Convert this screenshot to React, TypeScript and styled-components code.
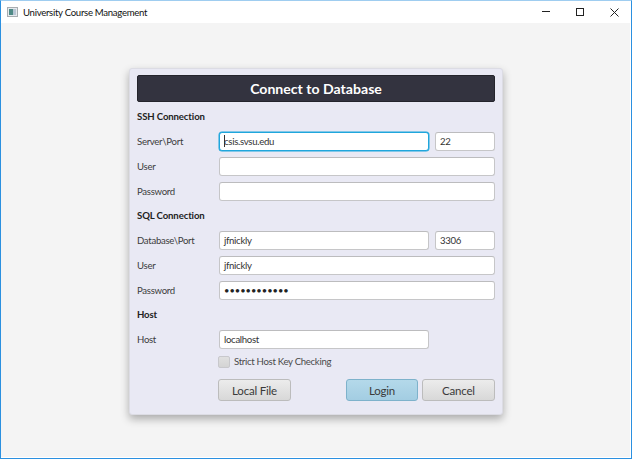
import React from "react";
import styled, { createGlobalStyle } from "styled-components";

const Global = createGlobalStyle`
  html, body { margin: 0; padding: 0; background: #f4f4f4; }
  #root { width: 632px; height: 459px; overflow: hidden; }
  * { box-sizing: border-box; }
`;

const Window = styled.div`
  width: 632px;
  height: 459px;
  display: flex;
  flex-direction: column;
  background: #fff;
  font-family: Lato, "Noto Sans", sans-serif;
  color: #333;
  border: 1px solid #2b90e0;
  border-top-color: #9fcdf0;
  padding: 0 1px 1px 0;
`;

const TitleBar = styled.div`
  height: 22px;
  margin-right: -1px;
  background: #fff;
  display: flex;
  align-items: center;
  padding-left: 6px;
  flex: none;
`;

const AppTitle = styled.span`
  margin-left: 5px;
  font-size: 9.6px;
  letter-spacing: -0.3px;
  color: #111;
  flex: 1;
`;

const WinButton = styled.div`
  width: 34px;
  height: 22px;
  display: flex;
  align-items: center;
  justify-content: center;
`;

const Stage = styled.div`
  flex: 1;
  display: flex;
  align-items: flex-start;
  padding: 45px 0 0 128px;
  background: #f4f4f4;
`;

const Card = styled.div`
  width: 374px;
  height: 347px;
  background: #e9e9f4;
  border: 1px solid #dcdce4;
  border-radius: 3px;
  box-shadow: 0 4px 9px rgba(0, 0, 0, 0.3);
  padding: 6px 7px 0;
  display: flex;
  flex-direction: column;
`;

const Header = styled.div`
  height: 27px;
  background: #33333f;
  border: 1px solid #24242c;
  border-radius: 2px;
  color: #fff;
  font-weight: 700;
  font-size: 14.1px;
  display: flex;
  align-items: center;
  justify-content: center;
  flex: none;
`;

const Section = styled.div<{ $top: number }>`
  margin-top: ${(p) => p.$top}px;
  height: 14px;
  line-height: 14px;
  font-size: 9.6px;
  letter-spacing: -0.12px;
  font-weight: 700;
  color: #222;
`;

const Row = styled.div<{ $top: number }>`
  margin-top: ${(p) => p.$top}px;
  height: 19px;
  display: flex;
  align-items: center;
`;

const Label = styled.label`
  width: 82px;
  flex: none;
  padding-bottom: 1px;
  font-size: 9.6px;
  letter-spacing: -0.3px;
  color: #3c3c3c;
`;

const Field = styled.div<{ $w?: number; $focus?: boolean; $dots?: boolean }>`
  width: ${(p) => (p.$w ? `${p.$w}px` : "276px")};
  height: 19px;
  margin-right: ${(p) => (p.$w === 210 ? "6px" : "0")};
  flex: none;
  background: #fff;
  border: 1px solid ${(p) => (p.$focus ? "#1fa6dc" : "#c6c6c8")};
  border-top-color: ${(p) => (p.$focus ? "#1fa6dc" : "#bcbcbe")};
  box-shadow: ${(p) => (p.$focus ? "0 0 0 0.5px #1fa6dc" : "none")};
  border-radius: 3px;
  padding: 0 4px;
  font-size: ${(p) => (p.$dots ? "9.3px" : "9.6px")};
  line-height: 17px;
  color: ${(p) => (p.$dots ? "#222" : "#333")};
  letter-spacing: ${(p) => (p.$dots ? "0" : "-0.3px")};
  white-space: nowrap;
  overflow: hidden;
`;

const Caret = styled.span`
  display: inline-block;
  width: 1px;
  height: 12px;
  margin-right: -1px;
  vertical-align: -2px;
  background: #333;
`;

const CheckRow = styled.div`
  margin: 6px 0 0 81px;
  height: 13px;
  display: flex;
  align-items: center;
`;

const CheckBox = styled.span`
  width: 12px;
  height: 12px;
  margin-right: 4px;
  background: linear-gradient(#e0e0e0, #d4d4d4);
  border: 1px solid #c8c8cc;
  border-radius: 2px;
`;

const CheckText = styled.span`
  font-size: 9.6px;
  letter-spacing: -0.3px;
  color: #4a4a4a;
`;

const Actions = styled.div`
  margin: 11px 0 0 81px;
  display: flex;
  width: 277px;
`;

const Btn = styled.div<{ $w: number; $primary?: boolean; $push?: boolean }>`
  width: ${(p) => p.$w}px;
  height: 22px;
  margin-left: ${(p) => (p.$push ? "auto" : "0")};
  margin-right: ${(p) => (p.$primary ? "4px" : "0")};
  border-radius: 3px;
  border: 1px solid ${(p) => (p.$primary ? "#7eb2cb" : "#bcbcbc")};
  background: ${(p) =>
    p.$primary
      ? "linear-gradient(#b4d9ea, #a3cde2)"
      : "linear-gradient(#ececec, #d8d8d8)"};
  color: #3a3a3a;
  font-size: 11.5px;
  letter-spacing: -0.2px;
  display: flex;
  align-items: center;
  justify-content: center;
`;

const LogoIcon = () => (
  <svg width="11" height="10" viewBox="0 0 11 10">
    <rect x="0.5" y="0.5" width="10" height="9" fill="#e6eaee" stroke="#a8adb1" />
    <rect x="2" y="2" width="4" height="6" fill="#4f8a86" />
    <rect x="6" y="2" width="3" height="6" fill="#b8c6d4" />
  </svg>
);

export default function App() {
  return (
    <Window>
      <Global />
      <TitleBar>
        <LogoIcon />
        <AppTitle>University Course Management</AppTitle>
        <WinButton>
          <svg width="8" height="8" viewBox="0 0 8 8">
            <path d="M0 3.5H8" stroke="#222" fill="none" />
          </svg>
        </WinButton>
        <WinButton>
          <svg width="8" height="8" viewBox="0 0 8 8">
            <rect x="0.5" y="0.5" width="7" height="7" stroke="#222" fill="none" />
          </svg>
        </WinButton>
        <WinButton>
          <svg width="9" height="9" viewBox="0 0 9 9">
            <path d="M0.5 0.5L8.5 8.5M8.5 0.5L0.5 8.5" stroke="#222" fill="none" />
          </svg>
        </WinButton>
      </TitleBar>
      <Stage>
        <Card>
          <Header>Connect to Database</Header>
          <Section $top={8}>SSH Connection</Section>
          <Row $top={8}>
            <Label>Server\Port</Label>
            <Field $w={210} $focus>
              <Caret />
              csis.svsu.edu
            </Field>
            <Field $w={60}>22</Field>
          </Row>
          <Row $top={6}>
            <Label>User</Label>
            <Field />
          </Row>
          <Row $top={6}>
            <Label>Password</Label>
            <Field />
          </Row>
          <Section $top={8}>SQL Connection</Section>
          <Row $top={8}>
            <Label>Database\Port</Label>
            <Field $w={210}>jfnickly</Field>
            <Field $w={60}>3306</Field>
          </Row>
          <Row $top={6}>
            <Label>User</Label>
            <Field>jfnickly</Field>
          </Row>
          <Row $top={6}>
            <Label>Password</Label>
            <Field $dots>••••••••••••</Field>
          </Row>
          <Section $top={8}>Host</Section>
          <Row $top={8}>
            <Label>Host</Label>
            <Field $w={210}>localhost</Field>
          </Row>
          <CheckRow>
            <CheckBox />
            <CheckText>Strict Host Key Checking</CheckText>
          </CheckRow>
          <Actions>
            <Btn $w={73}>Local File</Btn>
            <Btn $w={72} $primary $push>
              Login
            </Btn>
            <Btn $w={73}>Cancel</Btn>
          </Actions>
        </Card>
      </Stage>
    </Window>
  );
}
